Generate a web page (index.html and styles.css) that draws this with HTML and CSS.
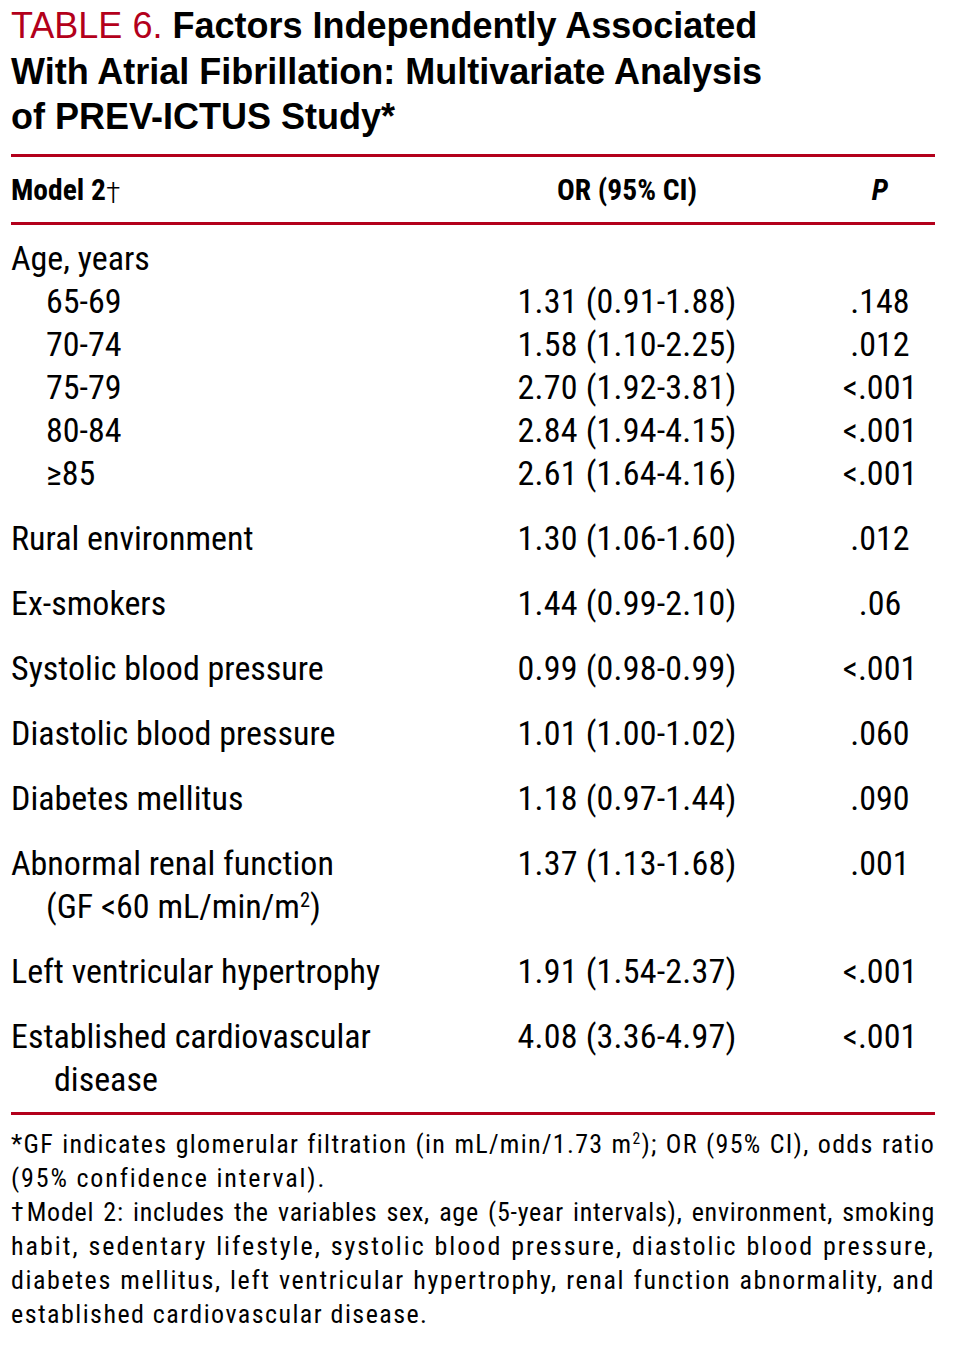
FILE: index.html
```html
<!DOCTYPE html>
<html lang="en">
<head>
<meta charset="utf-8">
<title>Table 6</title>
<link rel="stylesheet" href="styles.css">
</head>
<body>
<div class="page">
  <h1 class="title"><span class="label">TABLE 6.</span> Factors Independently Associated<br>With Atrial Fibrillation: Multivariate Analysis<br>of PREV-ICTUS Study*</h1>
  <table class="tbl">
    <colgroup>
      <col class="c-label">
      <col class="c-or">
      <col class="c-p">
    </colgroup>
    <thead>
      <tr>
        <th class="h-label">Model 2<span class="dag">†</span></th>
        <th class="h-or">OR (95% CI)</th>
        <th class="h-p"><i>P</i></th>
      </tr>
    </thead>
    <tbody>
      <tr class="first">
        <td class="lab">Age, years</td><td class="or"></td><td class="p"></td>
      </tr>
      <tr><td class="lab sub">65-69</td><td class="or">1.31 (0.91-1.88)</td><td class="p">.148</td></tr>
      <tr><td class="lab sub">70-74</td><td class="or">1.58 (1.10-2.25)</td><td class="p">.012</td></tr>
      <tr><td class="lab sub">75-79</td><td class="or">2.70 (1.92-3.81)</td><td class="p">&lt;.001</td></tr>
      <tr><td class="lab sub">80-84</td><td class="or">2.84 (1.94-4.15)</td><td class="p">&lt;.001</td></tr>
      <tr><td class="lab sub">≥85</td><td class="or">2.61 (1.64-4.16)</td><td class="p">&lt;.001</td></tr>
      <tr class="grp"><td class="lab">Rural environment</td><td class="or">1.30 (1.06-1.60)</td><td class="p">.012</td></tr>
      <tr class="grp"><td class="lab">Ex-smokers</td><td class="or">1.44 (0.99-2.10)</td><td class="p">.06</td></tr>
      <tr class="grp"><td class="lab">Systolic blood pressure</td><td class="or">0.99 (0.98-0.99)</td><td class="p">&lt;.001</td></tr>
      <tr class="grp"><td class="lab">Diastolic blood pressure</td><td class="or">1.01 (1.00-1.02)</td><td class="p">.060</td></tr>
      <tr class="grp"><td class="lab">Diabetes mellitus</td><td class="or">1.18 (0.97-1.44)</td><td class="p">.090</td></tr>
      <tr class="grp"><td class="lab">Abnormal renal function<span class="cont">(GF &lt;60 mL/min/m<sup>2</sup>)</span></td><td class="or">1.37 (1.13-1.68)</td><td class="p">.001</td></tr>
      <tr class="grp"><td class="lab">Left ventricular hypertrophy</td><td class="or">1.91 (1.54-2.37)</td><td class="p">&lt;.001</td></tr>
      <tr class="grp last"><td class="lab">Established cardiovascular<span class="cont cont-wide">disease</span></td><td class="or">4.08 (3.36-4.97)</td><td class="p">&lt;.001</td></tr>
    </tbody>
  </table>
  <div class="notes">
    <p class="note"><span class="ln l1">*GF indicates glomerular filtration (in mL/min/1.73 m<sup>2</sup>); OR (95% CI), odds ratio</span><span class="ln end l2">(95% confidence interval).</span></p>
    <p class="note"><span class="ln l3">†Model 2: includes the variables sex, age (5-year intervals), environment, smoking</span><span class="ln l4">habit, sedentary lifestyle, systolic blood pressure, diastolic blood pressure,</span><span class="ln l5">diabetes mellitus, left ventricular hypertrophy, renal function abnormality, and</span><span class="ln end l6">established cardiovascular disease.</span></p>
  </div>
</div>
</body>
</html>
```

FILE: styles.css
```css
html, body {
  margin: 0;
  padding: 0;
  background: #ffffff;
  color: #000000;
}

.page {
  width: 924px;
  margin-left: 11px;
  padding-top: 3px;
}

.title {
  margin: 0;
  font-family: "Liberation Sans", Arial, sans-serif;
  font-size: 36px;
  line-height: 45.5px;
  font-weight: bold;
  color: #000;
}

.title .label {
  color: #b3001b;
  font-weight: normal;
}

.tbl {
  width: 100%;
  table-layout: fixed;
  border-collapse: separate;
  border-spacing: 0;
  margin-top: 14.5px;
  font-family: "Roboto Condensed", "Roboto", sans-serif;
  font-stretch: condensed;
}

.c-label { width: 470px; }
.c-or { width: 292px; }
.c-p { width: 162px; }

.tbl th {
  font-size: 29.5px;
  line-height: 32px;
  font-weight: bold;
  padding: 17px 0 16px;
  border-top: 3px solid #b3001b;
  border-bottom: 3px solid #b3001b;
  vertical-align: top;
}

.h-label { text-align: left; }
.h-or { text-align: center; }
.h-p { text-align: center; padding-left: 52px !important; }

.dag {
  font-weight: 300;
  font-size: 30px;
  vertical-align: -3px;
  line-height: 0;
}

.tbl td {
  font-size: 34px;
  line-height: 43px;
  padding: 0;
  vertical-align: top;
}

.tbl td.or {
  text-align: center;
  letter-spacing: 0.2px;
}

.tbl td.p { text-align: center; padding-left: 52px; }

.tbl td.sub { padding-left: 35px; }

.tbl tr.first td { padding-top: 12px; }
.tbl tr.grp td { padding-top: 22px; }
.tbl tr.last td {
  padding-bottom: 11px;
  border-bottom: 3px solid #b3001b;
}

.cont {
  display: block;
  padding-left: 35px;
}

.cont-wide { padding-left: 43px; }

sup {
  font-size: 0.6em;
  line-height: 0;
  vertical-align: 0.55em;
}

.notes {
  padding-top: 12px;
  font-family: "Roboto Condensed", "Roboto", sans-serif;
  font-stretch: condensed;
  font-size: 26px;
  line-height: 34px;
}

.note { margin: 0; }

.ln {
  display: block;
  text-align: justify;
  text-align-last: justify;
}

.ln.end { text-align-last: left; }

.l1 { letter-spacing: 1.3px; }
.l2 { letter-spacing: 1.85px; }
.l3 { letter-spacing: 0.75px; }
.l4 { letter-spacing: 2px; }
.l5 { letter-spacing: 1.6px; }
.l6 { letter-spacing: 1.45px; }
```
